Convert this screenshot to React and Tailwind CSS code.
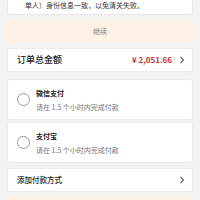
import React from 'react';

const font = { fontFamily: '"Noto Sans CJK SC", "Noto Sans", sans-serif' };

const Chevron = () => (
  <svg width="6" height="8" viewBox="0 0 6 8" className="shrink-0">
    <path d="M1.5 1 L4.5 4 L1.5 7" fill="none" stroke="#666" strokeWidth="1.1" />
  </svg>
);

const PayOption = ({ title, className }) => (
  <div className={`mx-[7px] h-[41px] bg-white rounded-[3px] border border-[#ececec] flex items-center pl-[9px] ${className}`}>
    <div className="w-[13px] h-[13px] rounded-full border border-[#9a9a9a] shrink-0" />
    <div className="ml-[6px] flex flex-col gap-[4px]">
      <div className="text-[7px] leading-[10px] font-bold text-[#222]">{title}</div>
      <div className="text-[7px] leading-[10px] text-[#777]">请在 1.5 个小时内完成付款</div>
    </div>
  </div>
);

export default function App() {
  return (
    <div className="w-[200px] h-[200px] overflow-hidden bg-[#f3f3f3] flex flex-col" style={font}>
      <div className="mx-[7px] bg-white border border-t-0 border-[#e8e8e8] rounded-b-[3px] h-[15px] pl-[17px]">
        <div className="text-[7px] leading-[10px] text-[#333]">单人）身份信息一致，以免清关失败。</div>
      </div>

      <div className="mt-[5px] mx-[6px] h-[23px] bg-[#fcf1e4] rounded-[3px] flex items-center justify-center text-[7px] text-[#8a8580]">
        继续
      </div>

      <div className="mt-[5px] mx-[7px] h-[24px] bg-white rounded-[3px] border border-[#ececec] flex items-center pl-[9px] pr-[7px]">
        <div className="text-[9px] font-medium text-[#222] flex-1">订单总金额</div>
        <div className="text-[8px] font-bold text-[#c0392b] mr-[7px]">¥ 2,051.66</div>
        <Chevron />
      </div>

      <PayOption title="微信支付" className="mt-[7px]" />
      <PayOption title="支付宝" className="mt-[2px]" />

      <div className="mt-[5px] mx-[7px] h-[24px] bg-white rounded-[3px] border border-[#ececec] flex items-center pl-[9px] pr-[7px]">
        <div className="text-[7.5px] font-medium text-[#222] flex-1">添加付款方式</div>
        <Chevron />
      </div>

      <div className="mt-[4px] mx-[6px] flex-1 bg-[#fbf3e6] rounded-t-[3px]" />
    </div>
  );
}
